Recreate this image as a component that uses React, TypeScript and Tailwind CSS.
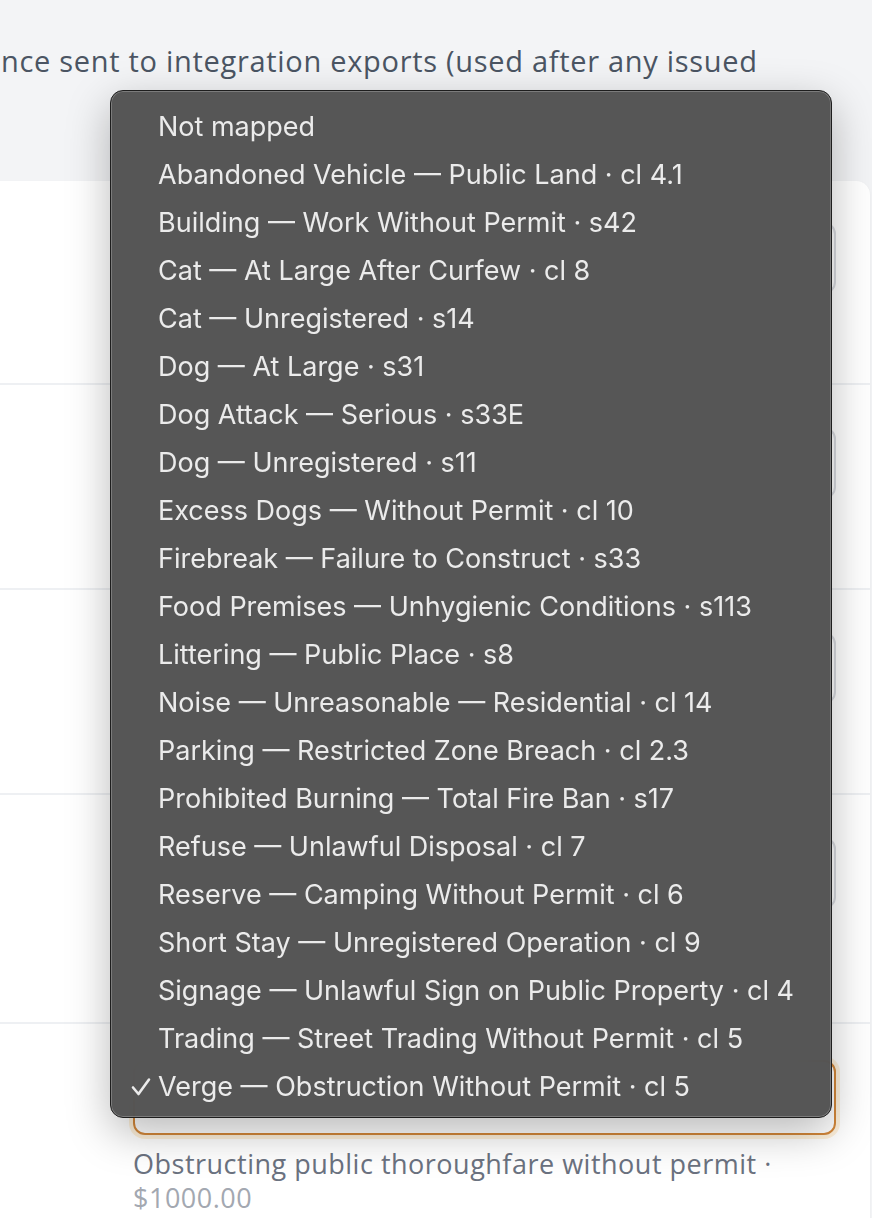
import React from "react";

const offences = [
  "Not mapped",
  "Abandoned Vehicle — Public Land · cl 4.1",
  "Building — Work Without Permit · s42",
  "Cat — At Large After Curfew · cl 8",
  "Cat — Unregistered · s14",
  "Dog — At Large · s31",
  "Dog Attack — Serious · s33E",
  "Dog — Unregistered · s11",
  "Excess Dogs — Without Permit · cl 10",
  "Firebreak — Failure to Construct · s33",
  "Food Premises — Unhygienic Conditions · s113",
  "Littering — Public Place · s8",
  "Noise — Unreasonable — Residential · cl 14",
  "Parking — Restricted Zone Breach · cl 2.3",
  "Prohibited Burning — Total Fire Ban · s17",
  "Refuse — Unlawful Disposal · cl 7",
  "Reserve — Camping Without Permit · cl 6",
  "Short Stay — Unregistered Operation · cl 9",
  "Signage — Unlawful Sign on Public Property · cl 4",
  "Trading — Street Trading Without Permit · cl 5",
  "Verge — Obstruction Without Permit · cl 5",
];

const selected = "Verge — Obstruction Without Permit · cl 5";

function Field({ focused = false }: { focused?: boolean }) {
  return (
    <div
      className={
        focused
          ? "h-[75px] rounded-[12px] border-2 border-[#d4883a] bg-white ring-4 ring-[#f59e0b]/15"
          : "h-[72px] rounded-[12px] border-2 border-[#d9dbe0] bg-white"
      }
    />
  );
}

export default function App() {
  return (
    <div
      className="relative w-[872px] h-[1218px] overflow-hidden bg-[#f3f4f6]"
      style={{ fontFamily: "'Open Sans', 'Noto Sans', sans-serif" }}
    >
      {/* page header */}
      <div className="h-[181px] pt-[41px]">
        <p className="whitespace-nowrap pl-[1px] text-[29px] leading-[40px] tracking-[0.7px] text-[#4b5563]">
          nce sent to integration exports (used after any issued
        </p>
      </div>

      {/* mapping card */}
      <div className="mr-[2px] rounded-tr-[14px] bg-white shadow-[0_1px_3px_rgba(0,0,0,0.05)]">
        <div className="h-[204px] border-b-2 border-[#eef0f3] pl-[133px] pr-[34px] pt-[41px]">
          <Field />
        </div>
        <div className="h-[205px] border-b-2 border-[#eef0f3] pl-[133px] pr-[34px] pt-[42px]">
          <Field />
        </div>
        <div className="h-[205px] border-b-2 border-[#eef0f3] pl-[133px] pr-[34px] pt-[42px]">
          <Field />
        </div>
        <div className="h-[229px] border-b-2 border-[#eef0f3] pl-[133px] pr-[34px] pt-[42px]">
          <Field />
        </div>
        <div className="h-[200px] pl-[133px] pr-[34px] pt-[36px]">
          <Field focused />
          <p className="mt-[12px] text-[27px] leading-[34px] tracking-[0.5px] text-[#6b7280]">
            Obstructing public thoroughfare without permit ·
            <br />
            <span className="text-[#a3a8b1]">$1000.00</span>
          </p>
        </div>
      </div>

      {/* open select menu */}
      <div
        className="absolute left-[110px] top-[90px] w-[722px] rounded-[13px] border border-[#1e1e1e] bg-[#4f4f4f]/[0.96] pt-[12px] pb-[6px] shadow-[inset_0_0_0_1px_rgba(255,255,255,0.22),0_14px_44px_rgba(0,0,0,0.28)] backdrop-blur-xl"
        style={{ fontFamily: "Inter, 'Liberation Sans', sans-serif" }}
      >
        {offences.map((o) => (
          <div
            key={o}
            className="relative flex h-[48px] items-center whitespace-nowrap pl-[47px] text-[27px] text-[#ebebeb]"
          >
            {o === selected && (
              <svg
                className="absolute left-[20px] top-[14px]"
                width="20"
                height="20"
                viewBox="0 0 20 20"
                fill="none"
              >
                <path
                  d="M2 10.5 L7.5 17 L18 2.5"
                  stroke="#ebebeb"
                  strokeWidth="2.6"
                  strokeLinecap="round"
                  strokeLinejoin="round"
                />
              </svg>
            )}
            {o}
          </div>
        ))}
      </div>
    </div>
  );
}
